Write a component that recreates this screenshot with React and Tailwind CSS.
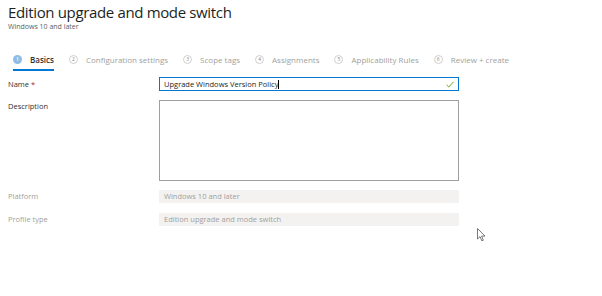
import React from 'react';

const steps = [
  { n: 1, label: 'Basics', active: true },
  { n: 2, label: 'Configuration settings' },
  { n: 3, label: 'Scope tags' },
  { n: 4, label: 'Assignments' },
  { n: 5, label: 'Applicability Rules' },
  { n: 6, label: 'Review + create' },
];

function Step({ n, label, active }) {
  return (
    <div className="relative flex items-center gap-[8px] pb-[6px] pt-[2px]">
      <span
        className={
          active
            ? 'flex h-[9px] w-[9px] items-center justify-center rounded-full bg-[#8dbde6] text-[5px] font-semibold text-white'
            : 'flex h-[9px] w-[9px] items-center justify-center rounded-full border border-[#d2d0ce] text-[5px] text-[#8a8886]'
        }
      >
        {n}
      </span>
      <span className={active ? 'font-semibold text-[#323130]' : 'text-[#a19f9d]'}>{label}</span>
      {active && <span className="absolute bottom-0 left-0 right-0 h-[2px] bg-[#0078d4]" />}
    </div>
  );
}

export default function App() {
  return (
    <div
      className="relative h-[296px] w-[602px] overflow-hidden bg-white text-[#323130]"
      style={{ fontFamily: '"Open Sans", "Noto Sans", sans-serif' }}
    >
      <div className="px-[8px] pt-[3px]">
        <h1 className="text-[15px] leading-[19px] font-medium tracking-[-0.35px] text-[#201f1e]">
          Edition upgrade and mode switch
        </h1>
        <div className="text-[7px] leading-[9px] text-[#605e5c]">Windows 10 and later</div>
      </div>

      <div className="mt-[21px] flex gap-[15px] pl-[13px] text-[8px] leading-[11px]">
        {steps.map((s) => (
          <Step key={s.n} {...s} />
        ))}
      </div>

      <div className="mt-[6px] grid grid-cols-[151px_300px] gap-y-[9px] pl-[8px] text-[7.5px] leading-[11px]">
        <div className="flex items-center">
          Name <span className="ml-[2px] text-[#a4262c]">*</span>
        </div>
        <div className="flex h-[14px] items-center justify-between border border-[#0078d4] px-[4px]">
          <span className="text-[#201f1e]">
            Upgrade Windows Version Policy<span className="inline-block h-[9px] w-px bg-black align-middle" />
          </span>
          <svg width="8" height="7" viewBox="0 0 8 7" fill="none">
            <path d="M0.5 3.8 L2.8 6 L7.5 0.8" stroke="#57a300" strokeWidth="0.9" />
          </svg>
        </div>

        <div className="pt-[1px]">Description</div>
        <div className="h-[81px] border border-[#a19f9d]" />

        <div className="flex items-center text-[#a19f9d]">Platform</div>
        <div className="flex h-[13px] items-center bg-[#f3f2f1] px-[5px] text-[#a19f9d]">Windows 10 and later</div>

        <div className="mt-[1px] flex items-center text-[#a19f9d]">Profile type</div>
        <div className="mt-[1px] flex h-[13px] items-center bg-[#f3f2f1] px-[5px] text-[#a19f9d]">
          Edition upgrade and mode switch
        </div>
      </div>

      <svg className="absolute left-[477px] top-[228px]" width="9" height="14" viewBox="0 0 9 14">
        <path d="M0.5 0.5 L0.5 11 L3 8.6 L4.8 12.8 L6.3 12.2 L4.6 8.1 L8 8.1 Z" fill="white" stroke="#555" strokeWidth="0.8" />
      </svg>
    </div>
  );
}
